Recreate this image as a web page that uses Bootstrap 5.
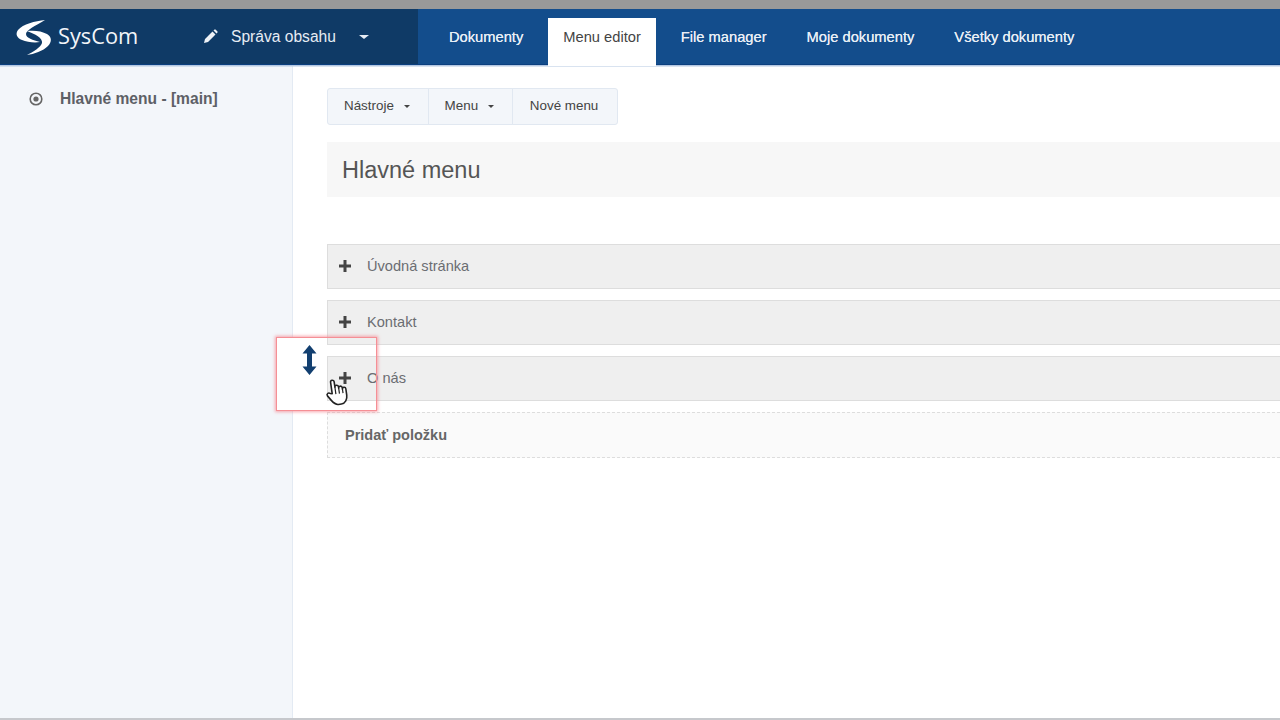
<!DOCTYPE html>
<html lang="en">
<head>
<meta charset="UTF-8">
<meta name="viewport" content="width=device-width, initial-scale=1.0">
<title>SysCom - Menu editor</title>
<link href="https://cdn.jsdelivr.net/npm/bootstrap@5.3.0/dist/css/bootstrap.min.css" rel="stylesheet">
<style>
    html, body { height: 100%; }
    body {
        font-family: "Liberation Sans", Arial, sans-serif;
        font-size: 14px;
        color: #555;
        background: #fff;
        overflow: hidden;
    }
    .page-wrap { height: 720px; position: relative; border-top: 9px solid #999; border-bottom: 2px solid #c6c8cc; }
    .top-bar { height: 56px; background: #134d8c; border-bottom: 1px solid #0b3f7f; box-shadow: 0 1.500px 0 #b4c8e2; position: relative; z-index: 2; }
    .brand-side { width: 418px; background: #0f3a66; color: #eef2f7; }
    .brand-logo { margin-left: 15px; width: 38px; height: 38px; }
    .brand-name { font-family: "Open Sans", sans-serif; font-size: 21.8px; margin-left: 5px; width: 145px; color: #f2f5f9; }
    .brand-menu { font-size: 15.6px; color: #e6ecf4; margin-left: 13px; margin-right: 23px; }
    .caret-mark { display: inline-block; width: 0; height: 0; border-top: 3px solid currentColor; border-left: 3.500px solid transparent; border-right: 3.500px solid transparent; vertical-align: 2px; }
    .caret-big { border-top-width: 4px; border-left-width: 5px; border-right-width: 5px; color: #e6ecf4; }
    .tab-list { padding-left: 16px; align-items: flex-end; }
    .tab-item { display: block; padding: 0 15px; height: 47px; line-height: 40px; font-size: 14.7px; color: #e8eef6; text-decoration: none; text-shadow: 0 0 .6px #e8eef6; margin-right: 10px; white-space: nowrap; }
    .tab-item.on { background: #fff; color: #444; height: 48px; line-height: 38px; margin-bottom: -2px; text-shadow: none; }
    .body-row { height: 653px; }
    .side-pane { width: 293px; background: #f3f6fa; border-right: 1px solid #e3eaf3; padding: 22px 0 0 29px; }
    .side-link { font-weight: 700; color: #5d6066; font-size: 15.6px; margin-left: 17px; }
    .main-pane { padding: 23px 0 0 34px; }
    .tool-btn { background: #f3f6fa; border: 1px solid #e1e8f1; height: 37px; padding: 0 16px; font-size: 13.4px; color: #444; border-radius: 0; }
    .tool-btn .caret-mark { margin-left: 6px; margin-right: 2px; }
    .tool-btn:first-child { border-radius: 3px 0 0 3px; }
    .tool-btn:last-child { border-radius: 0 3px 3px 0; padding: 0 19px 0 17px; }
    .tool-btn + .tool-btn { margin-left: -1px; }
    .title-panel { background: #f7f7f7; height: 55px; margin-top: 17px; padding-left: 15px; margin-bottom: 47px; }
    .title-panel h1 { font-size: 23.5px; font-weight: 400; color: #555; margin: 0; line-height: 56px; }
    .row-item { height: 45px; background: #efefef; border: 1px solid #ddd; border-right: 0; margin-bottom: 11px; padding-left: 11px; color: #6b6d72; font-size: 14.6px; }
    .row-item svg { margin-top: -2px; }
    .row-item .row-label { margin-left: 16px; }
    .add-item { height: 46px; background: #fafafa; border: 1px dashed #ddd; border-right: 0; padding: 2px 0 0 17px; font-weight: 700; color: #666; font-size: 14.5px; }
    .hl-box { position: absolute; left: 276px; top: 328px; width: 101px; height: 74px; border: 1px solid #f58f95; box-shadow: 0 0 3px 1px rgba(245,130,140,.7); background: linear-gradient(to right, #fff 16px, transparent 16px); z-index: 3; }
    .hl-arrow { position: absolute; left: 25px; top: 7px; }
    .hl-hand { position: absolute; left: 48px; top: 40px; }
</style>
</head>
<body>
<div class="page-wrap">
    <!-- Top bar -->
    <div class="top-bar d-flex">
        <div class="brand-side d-flex align-items-center">
            <svg class="brand-logo" viewBox="0 0 38 38" aria-hidden="true">
                <path fill="#fff" d="M30 2C20 3 8 6 3 12c-3 4-1 8 4 10 5 2 12 3 18 2-7-2-14-4-14-8 0-4 9-8 19-14z"/>
                <path fill="#fff" d="M12 13c7-1 15 0 20 3 5 3 5 8 1 12-5 5-14 8-21 9 6-3 14-8 15-12 1-5-7-9-15-12z"/>
            </svg>
            <span class="brand-name">SysCom</span>
            <svg width="15" height="15" viewBox="0 0 15 15" aria-hidden="true"><path fill="#eef2f7" d="M9.500 2.500l3 3-7.500 7.500-4 1 1-4zM10.500 1.500l.8-.8a1 1 0 0 1 1.400 0l1.600 1.600a1 1 0 0 1 0 1.400l-.8.8z"/></svg>
            <span class="brand-menu">Správa obsahu</span>
            <span class="caret-mark caret-big"></span>
        </div>
        <div class="tab-list d-flex">
            <a class="tab-item" href="#">Dokumenty</a>
            <a class="tab-item on" href="#">Menu editor</a>
            <a class="tab-item" href="#">File manager</a>
            <a class="tab-item" href="#">Moje dokumenty</a>
            <a class="tab-item" href="#">Všetky dokumenty</a>
        </div>
    </div>

    <div class="body-row d-flex">
        <!-- Sidebar -->
        <div class="side-pane flex-shrink-0">
            <div class="d-flex align-items-center">
                <svg width="14" height="14" viewBox="0 0 14 14" aria-hidden="true"><circle cx="7" cy="7" r="5.800" fill="none" stroke="#666" stroke-width="1.600"/><circle cx="7" cy="7" r="2.600" fill="#666"/></svg>
                <span class="side-link">Hlavné menu - [main]</span>
            </div>
        </div>

        <!-- Main -->
        <div class="main-pane flex-grow-1">
            <div class="btn-group">
                <button class="btn tool-btn">Nástroje <span class="caret-mark"></span></button>
                <button class="btn tool-btn">Menu <span class="caret-mark"></span></button>
                <button class="btn tool-btn">Nové menu</button>
            </div>
            <div class="title-panel"><h1>Hlavné menu</h1></div>
            <div class="row-item d-flex align-items-center">
                <svg width="12" height="12" viewBox="0 0 12 12" aria-hidden="true"><path fill="#444" d="M4.500 0h3v4.500H12v3H7.500V12h-3V7.500H0v-3h4.500z"/></svg>
                <span class="row-label">Úvodná stránka</span>
            </div>
            <div class="row-item d-flex align-items-center">
                <svg width="12" height="12" viewBox="0 0 12 12" aria-hidden="true"><path fill="#444" d="M4.500 0h3v4.500H12v3H7.500V12h-3V7.500H0v-3h4.500z"/></svg>
                <span class="row-label">Kontakt</span>
            </div>
            <div class="row-item d-flex align-items-center">
                <svg width="12" height="12" viewBox="0 0 12 12" aria-hidden="true"><path fill="#444" d="M4.500 0h3v4.500H12v3H7.500V12h-3V7.500H0v-3h4.500z"/></svg>
                <span class="row-label">O nás</span>
            </div>
            <div class="add-item d-flex align-items-center">Pridať položku</div>
        </div>
    </div>

    <!-- Highlight over the drag handle -->
    <div class="hl-box">
        <svg class="hl-arrow" width="15" height="30" viewBox="0 0 15 30" aria-hidden="true"><path fill="#123f70" d="M7.500 0l7 8.500H10v13h4.500L7.500 30 .5 21.500H5v-13H.5z"/></svg>
        <svg class="hl-hand" width="24" height="28" viewBox="0 0 24 28" aria-hidden="true">
            <g transform="rotate(-8 12 14)">
                <path fill="#fff" stroke="#222" stroke-width="1.600" stroke-linejoin="round" d="M7 15V3.500a1.800 1.800 0 0 1 3.600 0V9a1.800 1.800 0 0 1 3.600 0v1.500a1.800 1.800 0 0 1 3.600 0V12a1.700 1.700 0 0 1 3.400 0v6.500c0 4-2.500 8-6.500 8h-3c-3 0-4.500-2-6.500-5L2 16.500c-1-2 1.500-3.500 3-2z"/>
                <path fill="none" stroke="#222" stroke-width="1.200" d="M10.600 9v7M14.200 10v6M17.800 11.500V16"/>
            </g>
        </svg>
    </div>
</div>
<script src="https://cdn.jsdelivr.net/npm/bootstrap@5.3.0/dist/js/bootstrap.bundle.min.js"></script>
</body>
</html>
